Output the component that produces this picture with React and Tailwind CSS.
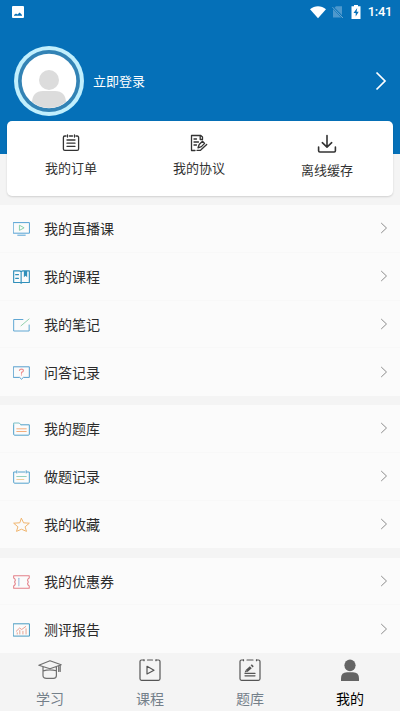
const stroke = { fill: 'none', strokeLinecap: 'round', strokeLinejoin: 'round' };

function StatusBar() {
  return (
    <div className="flex h-6 items-center justify-between pl-3 pr-2 text-white">
      <svg width="12" height="12" viewBox="0 0 12 12" className="block">
        <rect width="12" height="12" rx="1" fill="#fff" />
        <path d="M2 9.8V9L4 7.4 5.4 8.6 7.7 6.6 10 9V9.8Z" fill="#0570b8" />
      </svg>
      <div className="flex items-center pb-px">
        <svg width="18" height="14" viewBox="0 0 18 14">
          <path d="M1 4.2C5.6.3 12.4.3 17 4.2L9 13.3Z" fill="#fff" />
        </svg>
        <svg width="12" height="14" viewBox="0 0 12 14" className="ml-[5px]">
          <path d="M4 1.2H10V12.5H1V4.2Z" fill="#4d98cd" />
          <path d="M0.5 2 11 12.8" stroke="#0570b8" strokeWidth="2" />
          <path d="M0.5 2.2 11 13" stroke="#69a8d3" strokeWidth="1" />
        </svg>
        <svg width="10" height="14" viewBox="0 0 10 14" className="ml-[7px]">
          <path d="M3 0H7V1.2H9.5V14H.5V1.2H3Z" fill="#fff" />
          <path d="M6.2 3 2.5 8H4.7V11.5L7.7 6.7H5.6Z" fill="#0570b8" />
        </svg>
        <span className="ml-[7px] font-[Roboto] text-[13px] font-medium leading-none tracking-[-0.35px]">1:41</span>
      </div>
    </div>
  );
}

function Avatar() {
  return (
    <svg width="70" height="70" viewBox="0 0 70 70" className="shrink-0">
      <defs>
        <clipPath id="face">
          <circle cx="35" cy="35" r="27" />
        </clipPath>
      </defs>
      <circle cx="35" cy="35" r="35" fill="#c1effd" />
      <circle cx="35" cy="35" r="31" fill="#3383b5" />
      <circle cx="35" cy="35" r="27.3" fill="#fff" />
      <g clipPath="url(#face)" fill="#dcdcdc">
        <circle cx="35" cy="34" r="10" />
        <path d="M18 63V57C18 49 22 45 29 45H41C48 45 52 49 52 57V63Z" />
      </g>
    </svg>
  );
}

const OrderIcon = () => (
  <svg width="18" height="18" viewBox="0 0 18 18" stroke="#333" strokeWidth="1.3" {...stroke}>
    <path d="M4 2H2.8Q1.4 2 1.4 3.4V15Q1.4 16.4 2.8 16.4H15.2Q16.6 16.4 16.6 15V3.4Q16.6 2 15.2 2H14M7.5 2H10.5" />
    <path d="M5.5 1V3M12.5 1V3M5 6H13M5 9.2H13M5 12.3H13" />
  </svg>
);

const AgreementIcon = () => (
  <svg width="18" height="18" viewBox="0 0 18 18" stroke="#333" strokeWidth="1.3" {...stroke}>
    <path d="M12.5 5.5V3L10.8 1.5H1.5V16.5H5M12.5 5.5H10.2V2" />
    <path d="M4 5H6.5M4 8H8.5M4 11H6.5M7 16.3H10.5" />
    <path d="M12.5 7.2 9.2 10.5 8 13.8 11.4 12.6 14.6 9.4ZM11 15.8 16.7 10.5" />
  </svg>
);

const DownloadIcon = () => (
  <svg width="20" height="20" viewBox="0 0 20 20" stroke="#333" strokeWidth="1.6" {...stroke}>
    <path d="M10 1.5V13M5.3 8.7 10 13.2 14.7 8.7M1.6 13V16.8Q1.6 18 2.8 18H17.2Q18.4 18 18.4 16.8V13" />
  </svg>
);

const LiveIcon = () => (
  <svg width="17" height="14" viewBox="0 0 18 14" preserveAspectRatio="none" stroke="#4f9fd3" {...stroke}>
    <rect x=".6" y=".6" width="16.8" height="10.6" />
    <path d="M5 13.2H13" />
    <path d="M6.8 3.6V8.4L11.4 6Z" stroke="#86cfa8" />
  </svg>
);

const CourseIcon = () => (
  <svg width="17" height="14" viewBox="0 0 18 14" preserveAspectRatio="none" stroke="#2f8fba" strokeWidth="1.2" {...stroke}>
    <path d="M8.6 1.8Q8 .8 6.5 .8H.7V12.5H7Q8.6 12.5 8.6 13.3ZM8.6 1.8Q9.3 .8 10.5 .8H17.3V12.5H10.3Q8.6 12.5 8.6 13.3" />
    <path d="M2.8 4.7H5.8M2.8 8.3H5.8" />
    <path d="M11.5 1H15V7.3L13.3 5.7 11.5 7.3Z" fill="#2f8fba" stroke="none" />
  </svg>
);

const NoteIcon = () => (
  <svg width="17" height="14" viewBox="0 0 18 14" preserveAspectRatio="none" stroke="#5ba4d2" {...stroke}>
    <path d="M10.5 1.5H.7V13H17.1V7" />
    <path d="M8.5 7.8 17 1" stroke="#8fd0aa" />
  </svg>
);

const QuestionIcon = () => (
  <svg width="17" height="14" viewBox="0 0 18 14" preserveAspectRatio="none" stroke="#4f9bcb" {...stroke}>
    <path d="M.7 .8H17.3V11.4H11L9 13.2 7 11.4H.7Z" />
    <path d="M6.8 4.3Q7 3.2 9 3.2T11.1 4.6Q11.1 5.8 9 6.4V7.3M9 8.8V9" stroke="#ee8f8f" strokeWidth="1.2" />
  </svg>
);

const FolderIcon = () => (
  <svg width="17" height="14" viewBox="0 0 18 14" preserveAspectRatio="none" stroke="#4b9dc8" {...stroke}>
    <path d="M.7 3V12.2Q.7 13.2 1.7 13.2H16.3Q17.3 13.2 17.3 12.2V2.8H8.5" />
    <path d="M.7 2.8V1H6.7L8.3 2.8" stroke="#76bfc6" />
    <path d="M4 6.8H14M4 9.5H14" stroke="#f4ab79" />
  </svg>
);

const CalendarIcon = () => (
  <svg width="17" height="14" viewBox="0 0 18 14" preserveAspectRatio="none" stroke="#4e9fcb" {...stroke}>
    <path d="M3 2H.7V12.2Q.7 13.2 1.7 13.2H16.3Q17.3 13.2 17.3 12.2V2H15M5.5 2H12.5M4 .7V3M14 .7V3" />
    <path d="M4 6.5H14" stroke="#8dd0bc" />
    <path d="M4 9.5H11.5" stroke="#efcb96" />
  </svg>
);

const StarIcon = () => (
  <svg width="17" height="14" viewBox="0 0 18 14" preserveAspectRatio="none" stroke="#efb36a" {...stroke}>
    <path d="M9 .5 11.2 4.8 17.3 5.2 12.8 8.8 14.3 13.4 9 11.2 3.7 13.4 5.2 8.8 .7 5.2 6.8 4.8Z" />
  </svg>
);

const CouponIcon = () => (
  <svg width="17" height="14" viewBox="0 0 18 14" preserveAspectRatio="none" stroke="#e38089" strokeWidth="1.1" {...stroke}>
    <path d="M.7 .8H17.2V3Q15.4 4 15.4 5.2L16.2 7 15.4 8.8Q15.4 10 17.2 11V13.2H.7V11Q2.5 10 2.5 8.8L1.7 7 2.5 5.2Q2.5 4 .7 3Z" />
    <path d="M6.2 3.3V10.8" stroke="#9ab9dc" />
  </svg>
);

const ReportIcon = () => (
  <svg width="17" height="14" viewBox="0 0 18 14" preserveAspectRatio="none" stroke="#4398bf" {...stroke}>
    <rect x=".6" y=".8" width="16.8" height="12.3" />
    <path d="M3.5 8.2 7 5 9.2 6.5 13.5 3.5" stroke="#e89b8c" />
    <path d="M4.5 9.8V11M7.2 7.5V11M10.5 8.3V11M13.8 5.8V11" stroke="#e7a391" />
  </svg>
);

const StudyIcon = () => (
  <svg width="24" height="24" viewBox="0 0 24 24" stroke="#707070" strokeWidth="1.2" {...stroke}>
    <path d="M.8 7.2 12 2.8 23.2 6.8 12 10.8ZM5 9V17.5Q5 20.3 8.5 20.3H15.5Q18.4 20.3 18.4 17.5V9.1M5.2 12.8Q12 10.8 18.2 12.8M20.7 8.3V13.5M22.2 7.5V13.5" />
  </svg>
);

const LessonIcon = () => (
  <svg width="24" height="24" viewBox="0 0 24 24" stroke="#555" strokeWidth="1.2" {...stroke}>
    <path d="M6 2H3.5Q2 2 2 3.5V20.8Q2 22.3 3.5 22.3H20.5Q22 22.3 22 20.8V3.5Q22 2 20.5 2H18M9.5 2H14.5" />
    <path d="M6 1.8V2.7M18 1.8V2.7M9 8.3V16L16 12.2Z" />
  </svg>
);

const ExamIcon = () => (
  <svg width="24" height="24" viewBox="0 0 24 24" stroke="#555" strokeWidth="1.2" {...stroke}>
    <path d="M5.5 2H3.5Q2 2 2 3.5V20.8Q2 22.3 3.5 22.3H20.5Q22 22.3 22 20.8V3.5Q22 2 20.5 2H18.5M9 2H15" />
    <path d="M5.5 1.8V2.7M18.5 1.8V2.7M7 15.4H17M7 17.8H17" />
    <path d="M8.6 13 12.8 9.2" strokeWidth="2.8" strokeLinecap="butt" />
    <path d="M13.6 8.4 14.8 7.3" strokeWidth="2.8" strokeLinecap="butt" />
    <path d="M6.6 14.6 7.6 12.2 9.2 13.8Z" fill="#555" stroke="none" />
  </svg>
);

const MeIcon = () => (
  <svg width="24" height="24" viewBox="0 0 24 24" fill="#646464">
    <ellipse cx="12" cy="7.3" rx="5.6" ry="5.9" />
    <path d="M3 23V20.5Q3 14.2 9 14.2H15Q21 14.2 21 20.5V23Z" />
  </svg>
);

const shortcuts = [
  { label: '我的订单', icon: <OrderIcon />, iconBox: 'h-5' },
  { label: '我的协议', icon: <AgreementIcon />, iconBox: 'h-5' },
  { label: '离线缓存', icon: <DownloadIcon />, iconBox: 'h-[22px]' },
];

const groups = [
  {
    gap: 'mt-[9px]',
    items: [
      { label: '我的直播课', icon: <LiveIcon /> },
      { label: '我的课程', icon: <CourseIcon /> },
      { label: '我的笔记', icon: <NoteIcon /> },
      { label: '问答记录', icon: <QuestionIcon /> },
    ],
  },
  {
    gap: 'mt-[9px]',
    items: [
      { label: '我的题库', icon: <FolderIcon /> },
      { label: '做题记录', icon: <CalendarIcon /> },
      { label: '我的收藏', icon: <StarIcon /> },
    ],
  },
  {
    gap: 'mt-[9.25px]',
    items: [
      { label: '我的优惠券', icon: <CouponIcon /> },
      { label: '测评报告', icon: <ReportIcon /> },
    ],
  },
];

const tabs = [
  { label: '学习', icon: <StudyIcon /> },
  { label: '课程', icon: <LessonIcon /> },
  { label: '题库', icon: <ExamIcon /> },
  { label: '我的', icon: <MeIcon />, active: true },
];

export default function App() {
  return (
    <main className="flex h-[711px] w-[400px] flex-col overflow-hidden bg-[#f4f4f4] font-['Noto_Sans_CJK_SC',sans-serif]">
      <header className="h-[154px] shrink-0 bg-[#0570b8]">
        <StatusBar />
        <div className="mt-[22px] flex items-center pl-[14px] pr-[13px] text-white">
          <Avatar />
          <span className="ml-[9px] flex-1 text-[13px] leading-5">立即登录</span>
          <svg width="12" height="20" viewBox="0 0 12 20" stroke="#fff" strokeWidth="1.7" fill="none">
            <path d="M1.5 1.5 10 10 1.5 18.5" />
          </svg>
        </div>
      </header>

      <section className="relative mx-[7px] -mt-[33px] grid h-[75px] shrink-0 grid-cols-3 rounded-[5px] bg-white pr-[2px] pt-3 text-[#333] shadow-[0_1px_2px_rgba(0,0,0,0.15)]">
        {shortcuts.map((item) => (
          <div key={item.label} className="flex flex-col items-center">
            <div className={`flex items-center ${item.iconBox}`}>{item.icon}</div>
            <span className="mt-[5px] text-[13px] leading-5">{item.label}</span>
          </div>
        ))}
      </section>

      {groups.map((group) => (
        <ul key={group.items[0].label} className={`shrink-0 divide-y divide-[#f8f8f8] bg-[#fbfbfb] ${group.gap}`}>
          {group.items.map((item) => (
            <li key={item.label} className="flex h-[47.75px] items-center pl-[13px] pr-3 pt-0.5">
              {item.icon}
              <span className="ml-[14px] flex-1 pb-0.5 text-sm text-[#2b2b2b]">{item.label}</span>
              <svg width="8" height="12" viewBox="0 0 8 12" className="mb-0.5" stroke="#8c8c8c" fill="none">
                <path d="M1.2 1 6.5 6 1.2 11" />
              </svg>
            </li>
          ))}
        </ul>
      ))}

      <nav className="mt-auto grid h-[58px] shrink-0 grid-cols-4 bg-[#f4f4f4] pt-[5px]">
        {tabs.map((tab) => (
          <div key={tab.label} className="flex flex-col items-center">
            <div className="mr-px">{tab.icon}</div>
            <span className={`mt-1.5 text-sm leading-5 ${tab.active ? 'text-black' : 'text-[#74808a]'}`}>
              {tab.label}
            </span>
          </div>
        ))}
      </nav>
    </main>
  );
}
